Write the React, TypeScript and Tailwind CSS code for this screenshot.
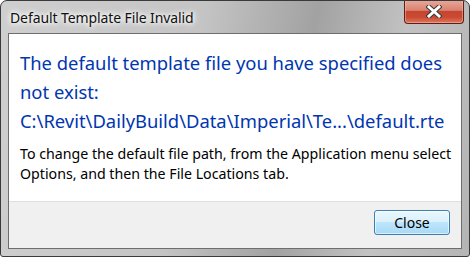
import React from 'react';

const CloseGlyph: React.FC = () => (
  <svg width="16" height="13" viewBox="0 0 16 13">
    <path d="M3 2 L13 11 M13 2 L3 11" stroke="#3a3a3a" strokeWidth="5" strokeLinecap="square" />
    <path d="M3 2 L13 11 M13 2 L3 11" stroke="#ffffff" strokeWidth="3" strokeLinecap="square" />
  </svg>
);

const App: React.FC = () => {
  return (
    <div className="w-[470px] h-[257px] bg-white">
      <div className="w-[470px] h-[257px] flex flex-col rounded-t-[7px] rounded-b-[3px] border border-[#3a3a3a] bg-[linear-gradient(100deg,#cfcfcf_0%,#c4c4c4_40%,#a2a2a2_62%,#c2c2c2_80%,#b4b4b4_100%)] overflow-hidden">
        {/* title bar */}
        <div className="h-[32px] flex items-start justify-between shrink-0">
          <div
            className="mt-[7px] ml-[9px] text-[14px] tracking-[-0.1px] leading-[20px] text-[#111] [text-shadow:0_0_8px_#fff,0_0_6px_#fff,0_0_4px_#fff]"
            style={{ fontFamily: '"Noto Sans", "Open Sans", sans-serif' }}
          >
            Default Template File Invalid
          </div>
          <div className="mr-[5px] w-[60px] h-[24px] -mt-px flex items-center justify-center rounded-b-[4px] border border-t-0 border-[#5a2018] bg-[linear-gradient(180deg,#e9a99c_0%,#d9826f_45%,#c6452f_50%,#c94a34_75%,#e0785c_100%)] shadow-[inset_0_0_0_1px_rgba(255,200,190,0.45)]">
            <CloseGlyph />
          </div>
        </div>

        {/* client area */}
        <div className="mx-[7px] flex-1 mb-[7px] flex flex-col border border-[#6e6e6e] bg-white">
          <div
            className="flex-1 pl-[11px] pt-[14px]"
            style={{ fontFamily: '"Noto Sans", "Open Sans", sans-serif' }}
          >
            <div className="text-[18.4px] leading-[29px] text-[#0036b0] whitespace-nowrap">
              <div>The default template file you have specified does</div>
              <div>not exist:</div>
              <div>C:\Revit\DailyBuild\Data\Imperial\Te...\default.rte</div>
            </div>
            <div className="mt-[9px] text-[14.2px] leading-[20px] text-black whitespace-nowrap">
              <div>To change the default file path, from the Application menu select</div>
              <div>Options, and then the File Locations tab.</div>
            </div>
          </div>
          <div className="h-[47px] shrink-0 border-t border-[#dfdfdf] bg-[#f0f0f0] flex items-start justify-end pr-[11px] pt-[8px]">
            <button
              className="w-[76px] h-[25px] rounded-[3px] border border-[#3c7fb1] bg-[linear-gradient(180deg,#eaf6fd_0%,#d9f0fc_50%,#bee6fd_50%,#a7d9f5_100%)] shadow-[inset_0_0_0_1px_rgba(255,255,255,0.6)] text-[14px] text-black"
              style={{ fontFamily: '"Noto Sans", "Open Sans", sans-serif' }}
            >
              Close
            </button>
          </div>
        </div>
      </div>
    </div>
  );
};

export default App;
